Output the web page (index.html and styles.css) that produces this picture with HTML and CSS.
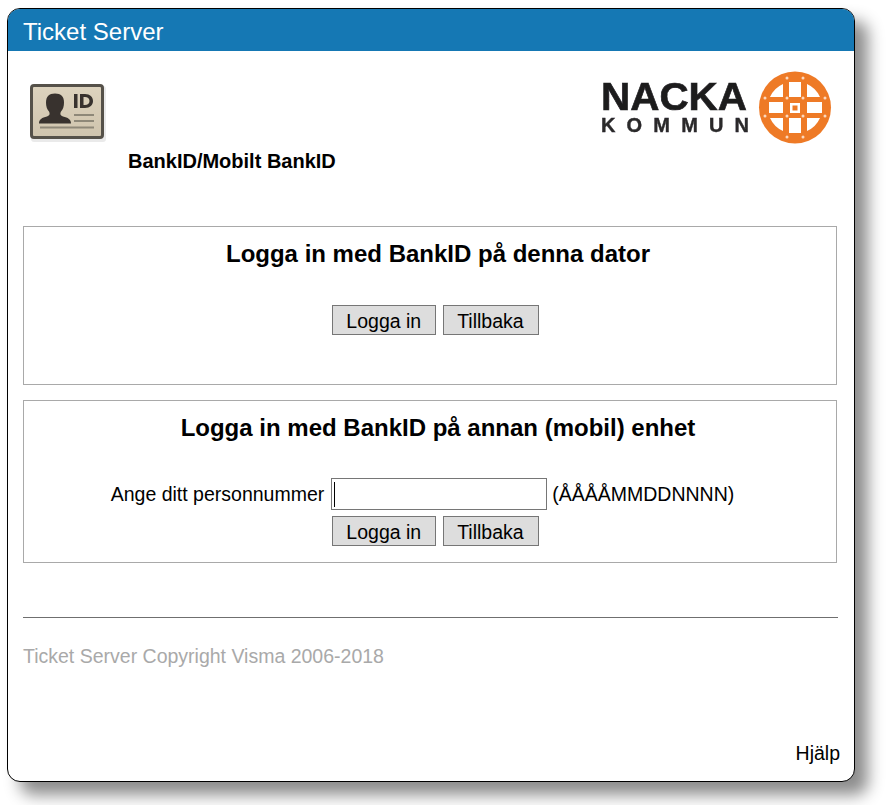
FILE: index.html
```html
<!DOCTYPE html>
<html lang="sv">
<head>
<meta charset="utf-8">
<title>Ticket Server</title>
<link rel="stylesheet" href="styles.css">
</head>
<body>
<main class="window">
  <header class="titlebar">Ticket Server</header>
  <div class="content">
    <div class="brand">
      <div class="method">
        <svg class="id-icon" width="80" height="64" viewBox="0 0 80 64" aria-hidden="true">
          <defs>
            <filter id="soft" x="-10%" y="-10%" width="120%" height="120%"><feGaussianBlur stdDeviation="0.6"/></filter>
            <linearGradient id="card" x1="0" y1="0" x2="0" y2="1"><stop offset="0" stop-color="#ddd3be"/><stop offset="1" stop-color="#cfc4ad"/></linearGradient>
          </defs>
          <rect x="3" y="4" width="75" height="56" rx="3" fill="#000" opacity=".08" filter="url(#soft)"/>
          <g filter="url(#soft)">
            <rect x="3.500" y="3.500" width="71" height="52" rx="2.500" fill="url(#card)" stroke="#55514a" stroke-width="3"/>
            <path d="M11 41.500c0-4 3-6 8-7 3-1 3-3 2-5-2-2-3-5-3-9 0-6 3-9 9-9s9 3 9 9c0 4-1 7-3 9-1 2-1 4 2 5 5 1 8 3 8 7z" fill="#37332e"/>
            <path d="M46 12h3.500v14H46zM52 12h5c5 0 8 3 8 7s-3 7-8 7h-5zM55.500 15v8h1.500c2.500 0 4.500-1.500 4.500-4s-2-4-4.500-4z" fill="#37332e"/>
            <path d="M46 33h20M46 39h20M12 45.500h54" stroke="#8e8878" stroke-width="2" fill="none"/>
          </g>
        </svg>
        <div class="method-name">BankID/Mobilt BankID</div>
      </div>
      <svg class="logo" width="232" height="76" viewBox="0 0 232 76" role="img" aria-label="Nacka kommun">
        <defs>
          <filter id="soft2" x="-5%" y="-5%" width="110%" height="110%"><feGaussianBlur stdDeviation="0.4"/></filter>
        </defs>
        <g filter="url(#soft2)">
          <text class="logo-top" x="0" y="41" textLength="146" lengthAdjust="spacingAndGlyphs">NACKA</text>
          <text class="logo-bottom" x="0" y="63" textLength="148" lengthAdjust="spacing">KOMMUN</text>
          <g transform="translate(1 0)">
            <circle cx="193" cy="38.500" r="36" fill="#ee7a27"/>
            <g fill="#fff">
              <rect x="187" y="13" width="12" height="15"/>
              <rect x="187" y="49" width="12" height="15"/>
              <rect x="167" y="33" width="14" height="11"/>
              <rect x="205" y="33" width="15" height="11"/>
              <path d="M181 28V15Q172 19 168 28zM205 28V15Q214 19 218 28zM181 49v13Q172 58 168 49zM205 49v13Q214 58 218 49z"/>
              <rect x="188" y="34" width="10" height="10"/>
            </g>
            <rect x="190.500" y="36.500" width="5" height="5" fill="#ee7a27"/>
            <g fill="#fbd9bf">
              <circle cx="185" cy="9" r="1.500"/><circle cx="201" cy="9" r="1.500"/>
              <circle cx="185" cy="29" r="1.500"/><circle cx="201" cy="29" r="1.500"/>
              <circle cx="185" cy="47" r="1.500"/><circle cx="201" cy="47" r="1.500"/>
              <circle cx="185" cy="68" r="1.500"/><circle cx="201" cy="68" r="1.500"/>
              <circle cx="163" cy="29" r="1.500"/><circle cx="223" cy="29" r="1.500"/>
              <circle cx="163" cy="47" r="1.500"/><circle cx="223" cy="47" r="1.500"/>
            </g>
          </g>
        </g>
      </svg>
    </div>

    <section class="panel panel-local">
      <h2 class="panel-title">Logga in med BankID på denna dator</h2>
      <div class="actions actions-local">
        <button class="btn" type="button">Logga in</button>
        <button class="btn" type="button">Tillbaka</button>
      </div>
    </section>

    <section class="panel panel-mobile">
      <h2 class="panel-title">Logga in med BankID på annan (mobil) enhet</h2>
      <div class="pnr-row">
        <label class="pnr-label" for="pnr">Ange ditt personnummer</label>
        <span class="pnr-input" id="pnr"><span class="caret"></span></span>
        <span class="pnr-hint">(ÅÅÅÅMMDDNNNN)</span>
      </div>
      <div class="actions actions-mobile">
        <button class="btn" type="button">Logga in</button>
        <button class="btn" type="button">Tillbaka</button>
      </div>
    </section>

    <hr class="rule">
    <p class="copyright">Ticket Server Copyright Visma 2006-2018</p>
  </div>
  <a class="help" href="#">Hjälp</a>
</main>
</body>
</html>
```

FILE: styles.css
```css
* { box-sizing: border-box; }

html, body { margin: 0; padding: 0; background: #fff; }

body {
  width: 893px;
  height: 805px;
  overflow: hidden;
  padding: 8px 0 0 7px;
  font-family: "Liberation Sans", Arial, sans-serif;
  font-size: 19.500px;
  color: #000;
}

.window {
  position: relative;
  width: 848px;
  height: 774px;
  border: 1px solid #000;
  border-radius: 13px;
  background: #fff;
  box-shadow: 13px 13px 16px rgba(0, 0, 0, 0.45);
  overflow: hidden;
  display: flex;
  flex-direction: column;
}

.titlebar {
  height: 42px;
  flex: none;
  padding: 9px 0 0 15px;
  background: #1578b4;
  color: #fff;
  font-size: 24px;
  line-height: 27px;
}

.content {
  flex: 1;
  padding: 0 15px 0 15px;
}

.brand {
  height: 175px;
  display: flex;
  justify-content: space-between;
  align-items: flex-start;
}

.method { padding-top: 31px; width: 340px; }

.id-icon { display: block; margin-left: 5px; }

.method-name {
  margin: 4px 0 0 105px;
  font-size: 20px;
  font-weight: bold;
  line-height: 22px;
  white-space: nowrap;
}

.logo { margin: 18px 6px 0 0; }

.logo-top {
  font-family: "Liberation Sans", Arial, sans-serif;
  font-size: 38px;
  font-weight: bold;
  fill: #1c1b1d;
  stroke: #1c1b1d;
  stroke-width: 0.6px;
}

.logo-bottom {
  font-family: "Liberation Sans", Arial, sans-serif;
  font-size: 20px;
  font-weight: bold;
  fill: #2a292b;
  stroke: #2a292b;
  stroke-width: 0.4px;
}

.panel {
  width: 814px;
  border: 1px solid #a9a9a9;
  text-align: center;
}

.panel-local { height: 159px; padding-top: 13px; }

.panel-mobile { height: 163px; margin-top: 15px; padding-top: 13px; }

.panel-title {
  margin: 0;
  padding-left: 16px;
  font-size: 24px;
  font-weight: bold;
  line-height: 28px;
}

.actions {
  display: flex;
  justify-content: center;
  gap: 7px;
  padding-left: 11px;
}

.actions-local { margin-top: 37px; }

.actions-mobile { margin-top: 4px; }

.btn {
  height: 30px;
  padding: 1px 14px 0 13px;
  border: 1px solid #767676;
  border-radius: 0;
  background: #dddddd;
  color: #000;
  font-family: inherit;
  font-size: 19.500px;
  line-height: 26px;
}

.pnr-row {
  margin-top: 34px;
  height: 36px;
  padding-right: 15px;
  display: flex;
  justify-content: center;
  align-items: center;
  gap: 6px;
  line-height: 24px;
  white-space: nowrap;
}

.pnr-input {
  display: block;
  width: 216px;
  height: 32px;
  margin: 0 -1px 0 1px;
  border: 1px solid #767676;
  background: #fff;
  padding: 3px 0 0 2px;
}

.caret {
  display: block;
  width: 1px;
  height: 25px;
  background: #000;
}

.rule {
  width: 815px;
  height: 1px;
  margin: 54px 0 0;
  border: 0;
  background: #6f6f6f;
}

.copyright {
  margin: 26px 0 0;
  color: #a9a9a9;
  font-size: 19.500px;
  line-height: 24px;
}

.help {
  position: absolute;
  right: 14px;
  bottom: 16px;
  color: #000;
  text-decoration: none;
  font-size: 19.500px;
  line-height: 24px;
}
```
